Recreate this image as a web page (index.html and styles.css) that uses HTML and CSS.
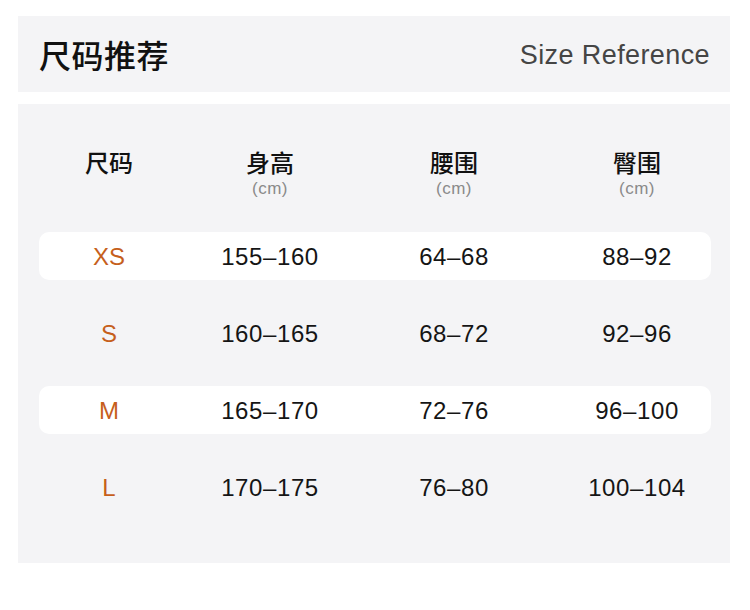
FILE: index.html
```html
<!DOCTYPE html>
<html lang="zh-CN">
<head>
<meta charset="utf-8">
<title>尺码推荐</title>
<link rel="stylesheet" href="styles.css">
</head>
<body>
<div class="page">
  <header class="head">
    <h1 class="title">尺码推荐</h1>
    <span class="subtitle">Size Reference</span>
  </header>
  <section class="chart">
    <div class="grid thead">
      <div class="th"><span class="th-name">尺码</span></div>
      <div class="th"><span class="th-name">身高</span><span class="unit">(cm)</span></div>
      <div class="th"><span class="th-name">腰围</span><span class="unit">(cm)</span></div>
      <div class="th last"><span class="th-name">臀围</span><span class="unit">(cm)</span></div>
    </div>
    <div class="rows">
      <div class="grid row shaded">
        <div class="td size">XS</div><div class="td">155–160</div><div class="td">64–68</div><div class="td last">88–92</div>
      </div>
      <div class="grid row">
        <div class="td size">S</div><div class="td">160–165</div><div class="td">68–72</div><div class="td last">92–96</div>
      </div>
      <div class="grid row shaded">
        <div class="td size">M</div><div class="td">165–170</div><div class="td">72–76</div><div class="td last">96–100</div>
      </div>
      <div class="grid row">
        <div class="td size">L</div><div class="td">170–175</div><div class="td">76–80</div><div class="td last">100–104</div>
      </div>
    </div>
  </section>
</div>
</body>
</html>
```
FILE: styles.css
```css
* { box-sizing: border-box; }
html, body { margin: 0; padding: 0; background: #ffffff; }
body {
  font-family: "Liberation Sans", "Noto Sans CJK SC", sans-serif;
  color: #111;
  width: 750px;
  height: 610px;
}
.page {
  padding: 16px 20px 0 18px;
  display: flex;
  flex-direction: column;
  gap: 12px;
}
.head {
  height: 76px;
  background: #f4f4f6;
  display: flex;
  align-items: center;
  justify-content: space-between;
  padding: 0 20px 0 21px;
}
.title {
  margin: 0;
  font-family: "Noto Sans CJK SC", sans-serif;
  font-size: 32px;
  font-weight: 500;
  color: #111;
  line-height: 1;
  letter-spacing: 0.5px;
}
.subtitle {
  font-size: 27px;
  color: #454545;
  letter-spacing: 0.4px;
  padding-top: 2px;
}
.chart {
  height: 459px;
  background: #f4f4f6;
  padding: 43px 19px 0 21px;
}
.grid {
  display: grid;
  grid-template-columns: 140px 182px 186px 1fr;
}
.th {
  display: flex;
  flex-direction: column;
  align-items: center;
}
.th-name {
  font-family: "Noto Sans CJK SC", sans-serif;
  font-size: 24px;
  line-height: 30px;
  font-weight: 500;
  color: #111;
}
.unit {
  font-size: 17px;
  line-height: 20px;
  margin-top: 2px;
  color: #8a8a8a;
  letter-spacing: 0.5px;
}
.last { padding-left: 16px; }
.rows {
  margin-top: 33px;
  display: flex;
  flex-direction: column;
  gap: 29px;
}
.row {
  height: 48px;
  border-radius: 10px;
  align-items: center;
}
.row.shaded { background: #ffffff; }
.td {
  text-align: center;
  font-size: 24px;
  line-height: 28px;
  padding-top: 2px;
  color: #151515;
  letter-spacing: 0.6px;
}
.td.size { color: #c65f1c; letter-spacing: 0; }
```
